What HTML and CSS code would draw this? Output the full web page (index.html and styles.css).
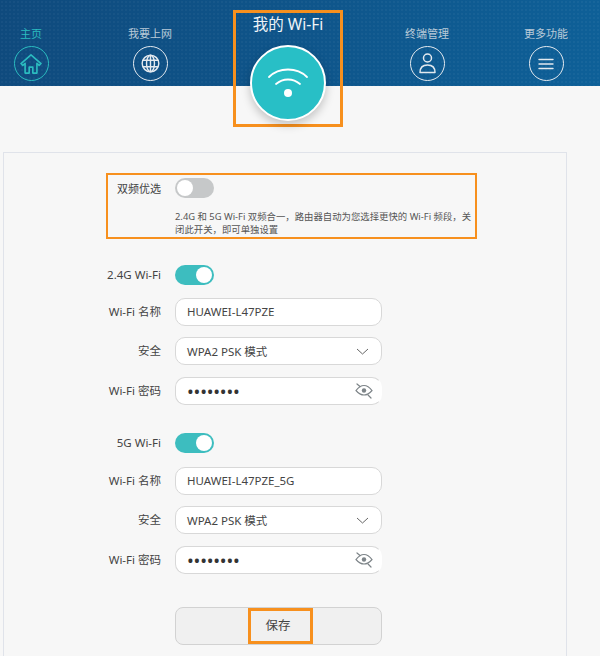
FILE: index.html
```html
<!DOCTYPE html>
<html lang="zh-CN">
<head>
    <meta charset="UTF-8">
    <title>我的 Wi-Fi</title>
    <link rel="stylesheet" href="styles.css">
</head>
<body>
    <nav class="top-nav">
        <a class="nav-item active">
            <span class="nav-label">主页</span>
            <span class="nav-icon">
                <svg width="22" height="20" viewBox="0 0 24 22" fill="none" stroke="currentColor" stroke-width="1.800" stroke-linejoin="round" stroke-linecap="round">
                    <path d="M1 10.500 12 1l11 9.500-2 2-2.500-2.200V21h-4.500v-6.500h-4V21H5.500V10.300L3 12.500z"/>
                </svg>
            </span>
        </a>
        <a class="nav-item net">
            <span class="nav-label">我要上网</span>
            <span class="nav-icon">
                <svg width="19" height="19" viewBox="0 0 24 24" fill="none" stroke="currentColor" stroke-width="1.800">
                    <circle cx="12" cy="12" r="10.500"/>
                    <ellipse cx="12" cy="12" rx="5" ry="10.500"/>
                    <path d="M12 1.500v21M2.500 8h19M2.500 16h19"/>
                </svg>
            </span>
        </a>
        <a class="nav-wifi">
            <span class="wifi-title">我的 Wi-Fi</span>
            <span class="wifi-disc">
                <svg width="42" height="38" viewBox="0 0 42 38" fill="none" stroke="#fff" stroke-width="1.800" stroke-linecap="round">
                    <path d="M2 12C12 2 30 2 40 12"/>
                    <path d="M9 19c7-6 17-6 24 0"/>
                    <circle cx="21" cy="28" r="4" fill="#fff" stroke="none"/>
                </svg>
            </span>
        </a>
        <a class="nav-item term">
            <span class="nav-label">终端管理</span>
            <span class="nav-icon">
                <svg width="19" height="21" viewBox="0 0 19 21" fill="none" stroke="currentColor" stroke-width="1.500">
                    <circle cx="9.500" cy="5" r="4"/>
                    <path d="M2 19.500c0-5 3-7.500 7.500-7.500s7.500 2.500 7.500 7.500z" stroke-linejoin="round"/>
                </svg>
            </span>
        </a>
        <a class="nav-item more">
            <span class="nav-label">更多功能</span>
            <span class="nav-icon">
                <svg width="16" height="12" viewBox="0 0 16 12" fill="none" stroke="currentColor" stroke-width="1.400" stroke-linecap="round">
                    <path d="M1 1.500h14M1 6h14M1 10.500h14"/>
                </svg>
            </span>
        </a>
    </nav>

    <main class="card">
        <section class="dual-band">
            <div class="row">
                <span class="row-label">双频优选</span>
                <span class="switch"></span>
            </div>
            <p class="dual-note">2.4G 和 5G Wi-Fi 双频合一，路由器自动为您选择更快的 Wi-Fi 频段，关闭此开关，即可单独设置</p>
        </section>

        <section class="band band-24">
            <div class="row">
                <span class="row-label">2.4G Wi-Fi</span>
                <span class="switch on"></span>
            </div>
            <div class="row field-row">
                <span class="row-label">Wi-Fi 名称</span>
                <div class="field">HUAWEI-L47PZE</div>
            </div>
            <div class="row field-row">
                <span class="row-label">安全</span>
                <div class="field select">WPA2 PSK 模式
                    <svg width="13" height="7" viewBox="0 0 13 7" fill="none" stroke="#666" stroke-width="1"><path d="M1 1l5.500 5L12 1"/></svg>
                </div>
            </div>
            <div class="row field-row">
                <span class="row-label">Wi-Fi 密码</span>
                <div class="field password"><span class="dots">••••••••</span>
                    <svg class="eye" width="18" height="16" viewBox="0 0 18 16" fill="none" stroke="#7d8488" stroke-width="1.200" stroke-linecap="round">
                        <path d="M1 7.500C4 3.500 6.500 2.500 9 2.500s5 1 8 5c-3 3.500-5.500 4.500-8 4.500s-5-1-8-4.500z"/>
                        <circle cx="9" cy="7.500" r="2.200" fill="#7d8488" stroke="none"/>
                        <path d="M2 1l3 2.500M13 12l3 3"/>
                    </svg>
                </div>
            </div>
        </section>

        <section class="band band-5">
            <div class="row">
                <span class="row-label">5G Wi-Fi</span>
                <span class="switch on"></span>
            </div>
            <div class="row field-row">
                <span class="row-label">Wi-Fi 名称</span>
                <div class="field">HUAWEI-L47PZE_5G</div>
            </div>
            <div class="row field-row">
                <span class="row-label">安全</span>
                <div class="field select">WPA2 PSK 模式
                    <svg width="13" height="7" viewBox="0 0 13 7" fill="none" stroke="#666" stroke-width="1"><path d="M1 1l5.500 5L12 1"/></svg>
                </div>
            </div>
            <div class="row field-row">
                <span class="row-label">Wi-Fi 密码</span>
                <div class="field password"><span class="dots">••••••••</span>
                    <svg class="eye" width="18" height="16" viewBox="0 0 18 16" fill="none" stroke="#7d8488" stroke-width="1.200" stroke-linecap="round">
                        <path d="M1 7.500C4 3.500 6.500 2.500 9 2.500s5 1 8 5c-3 3.500-5.500 4.500-8 4.500s-5-1-8-4.500z"/>
                        <circle cx="9" cy="7.500" r="2.200" fill="#7d8488" stroke="none"/>
                        <path d="M2 1l3 2.500M13 12l3 3"/>
                    </svg>
                </div>
            </div>
        </section>

        <div class="save-row">
            <button class="save-btn"><span class="save-mark">保存</span></button>
        </div>
    </main>
</body>
</html>
```

FILE: styles.css
```css
* {
    margin: 0;
    padding: 0;
    box-sizing: border-box;
    font-family: "Noto Sans", "Noto Sans CJK SC", sans-serif;
}

html, body {
    height: 656px;
    overflow: hidden;
}

body {
    background-color: #f7f7f7;
    color: #444;
    font-size: 11.500px;
}

/* top bar */
.top-nav {
    display: flex;
    align-items: flex-start;
    height: 86px;
    background-color: #0e5487;
    background-image: radial-gradient(rgba(255, 255, 255, 0.035) 1px, transparent 1px), linear-gradient(100deg, #0f4a7d, #0e6098);
    background-size: 4px 4px, auto;
}

.nav-item {
    display: flex;
    flex-direction: column;
    align-items: center;
    width: 62px;
    padding-top: 27px;
    color: #b9cad8;
}

.nav-item.active {
    color: #2bbcc0;
}

.nav-item.net {
    margin-left: 57px;
}

.nav-item.term {
    margin-left: 53px;
}

.nav-item.more {
    margin-left: 57px;
}

.nav-label {
    font-size: 11px;
    line-height: 14px;
}

.nav-icon {
    display: flex;
    justify-content: center;
    align-items: center;
    width: 35px;
    height: 35px;
    margin-top: 5px;
    border: 1.500px solid currentColor;
    border-radius: 50%;
}

.nav-item:not(.active) .nav-icon {
    color: #e3e9ef;
}

.nav-wifi {
    display: flex;
    flex-direction: column;
    align-items: center;
    position: relative;
    z-index: 1;
    width: 110px;
    height: 117px;
    margin-top: 10px;
    margin-left: 52px;
    border: 3px solid #f7901e;
}

.wifi-title {
    margin-top: 1px;
    color: #eef3f7;
    font-size: 15.500px;
    line-height: 20px;
}

.wifi-disc {
    display: flex;
    justify-content: center;
    align-items: center;
    width: 76px;
    height: 76px;
    margin-top: 11px;
    padding-top: 2px;
    background-color: #28bfc6;
    border: 2px solid #fff;
    border-radius: 50%;
    box-shadow: 0 4px 10px rgba(0, 0, 0, 0.22);
}

/* settings card */
.card {
    width: 564px;
    height: 504px;
    margin: 66px 0 0 3px;
    padding: 20px 0 0 0;
    border: 1px solid #e0e3ea;
    border-bottom: none;
}

.row {
    display: flex;
    align-items: center;
    gap: 14px;
}

.row-label {
    width: 100px;
    text-align: right;
    line-height: 14px;
}

.switch {
    position: relative;
    width: 39px;
    height: 20px;
    background-color: #c6c8c9;
    border-radius: 10px;
}

.switch::after {
    content: "";
    position: absolute;
    top: 2px;
    left: 2px;
    width: 16px;
    height: 16px;
    background-color: #fff;
    border-radius: 50%;
}

.switch.on {
    background-color: #3dbdbf;
}

.switch.on::after {
    left: 21px;
}

.dual-band {
    width: 371px;
    height: 66px;
    margin-left: 102px;
    padding-top: 3px;
    border: 2px solid #f7901e;
}

.dual-band .row-label {
    width: 53px;
    padding-top: 2px;
    font-size: 11px;
}

.dual-note {
    width: 298px;
    margin: 12px 0 0 67px;
    color: #555;
    font-size: 9.400px;
    line-height: 13px;
}

.band-24 {
    margin-top: 26px;
}

.band-5 {
    margin-top: 28.500px;
}

.band .row-label {
    width: 103px;
    margin-left: 54px;
}

.field-row {
    margin-top: 11.500px;
}

.band .row:nth-child(2) {
    margin-top: 13.500px;
}

.band-24 .row:nth-child(2) {
    margin-top: 12.500px;
}

.field {
    display: flex;
    justify-content: space-between;
    align-items: center;
    width: 207px;
    height: 28px;
    padding: 0 11px;
    background-color: #fff;
    border: 1.500px solid #d8d8d8;
    border-radius: 10px;
    color: #444;
    font-size: 11.500px;
}

.select svg {
    margin-right: 1px;
}

.dots {
    color: #333;
    font-size: 18px;
    line-height: 1;
    letter-spacing: -0.200px;
}

.password {
    padding-right: 8px;
    border-right-color: transparent;
}

.save-row {
    padding: 33.500px 0 0 171px;
}

.save-btn {
    display: flex;
    justify-content: center;
    align-items: center;
    width: 207px;
    height: 38px;
    background-color: #f0f0f0;
    border: 1.500px solid #d2d2d2;
    border-radius: 8px;
    color: #444;
    font-size: 12.500px;
}

.save-mark {
    width: 65px;
    height: 36px;
    margin-left: 4px;
    padding-right: 5px;
    border: 3px solid #f7901e;
    line-height: 30px;
    text-align: center;
}
```
